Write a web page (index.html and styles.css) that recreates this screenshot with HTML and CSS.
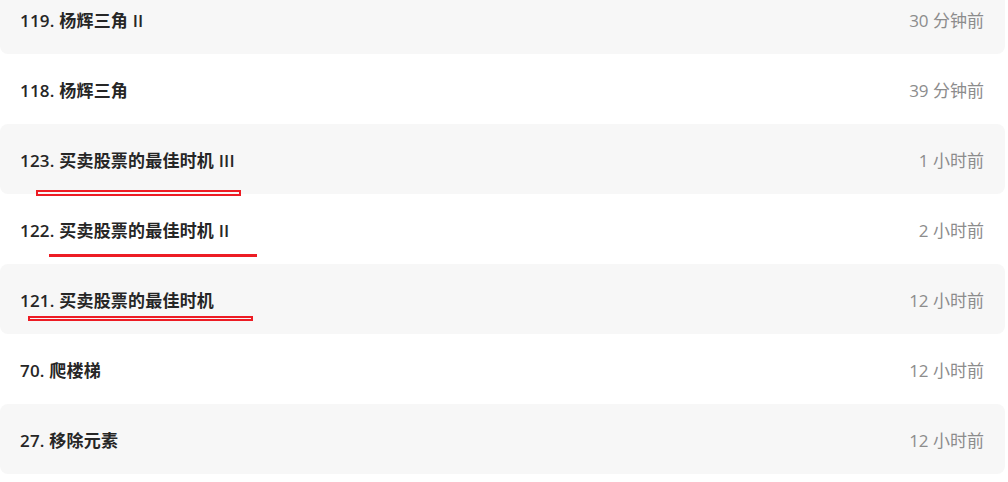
FILE: index.html
```html
<!DOCTYPE html>
<html lang="zh-CN">

<head>
  <meta charset="UTF-8">
  <meta name="viewport" content="width=device-width, initial-scale=1.0">
  <title>最近提交</title>
  <link rel="stylesheet" href="styles.css">
</head>

<body>
  <ul class="list">
    <li class="item">
      <span class="item-title">119. 杨辉三角 II</span>
      <span class="item-time">30 分钟前</span>
    </li>
    <li class="item">
      <span class="item-title">118. 杨辉三角</span>
      <span class="item-time">39 分钟前</span>
    </li>
    <li class="item">
      <span class="item-title">123. 买卖股票的最佳时机 III</span>
      <span class="item-time">1 小时前</span>
      <i class="mark mark-box mark-a"></i>
    </li>
    <li class="item">
      <span class="item-title">122. 买卖股票的最佳时机 II</span>
      <span class="item-time">2 小时前</span>
      <i class="mark mark-line"></i>
    </li>
    <li class="item">
      <span class="item-title">121. 买卖股票的最佳时机</span>
      <span class="item-time">12 小时前</span>
      <i class="mark mark-box mark-b"></i>
    </li>
    <li class="item">
      <span class="item-title">70. 爬楼梯</span>
      <span class="item-time">12 小时前</span>
    </li>
    <li class="item">
      <span class="item-title">27. 移除元素</span>
      <span class="item-time">12 小时前</span>
    </li>
  </ul>
</body>

</html>
```

FILE: styles.css
```css
html {
  box-sizing: border-box;
  font-family: 'Open Sans', 'Noto Sans CJK SC', sans-serif;
  font-size: 16px;
}

*,
*:after,
*:before {
  box-sizing: inherit;
}

body {
  margin: 0;
  background-color: #fff;
}

.list {
  list-style: none;
  margin: -16px 0 0;
  padding: 0;
  width: 1005px;
}

.item {
  position: relative;
  display: flex;
  align-items: center;
  justify-content: space-between;
  height: 70px;
  padding: 0 21px 0 20px;
  border-radius: 8px;
}

.item:nth-child(odd) {
  background-color: #f7f7f7;
}

.item-title {
  color: #262626;
  font-size: 17px;
  font-weight: 600;
  letter-spacing: .2px;
}

.item-time {
  color: #8c8c8c;
  font-size: 17px;
}

/* red annotation marks */
.mark {
  position: absolute;
  display: block;
}

.mark-box {
  border: 2px solid #ed1c24;
}

.mark-a {
  left: 36px;
  top: 66px;
  width: 205px;
  height: 6px;
}

.mark-b {
  left: 28px;
  top: 52px;
  width: 225px;
  height: 5px;
}

.mark-line {
  left: 49px;
  top: 60px;
  width: 208px;
  height: 3px;
  background-color: #ed1c24;
}
```
